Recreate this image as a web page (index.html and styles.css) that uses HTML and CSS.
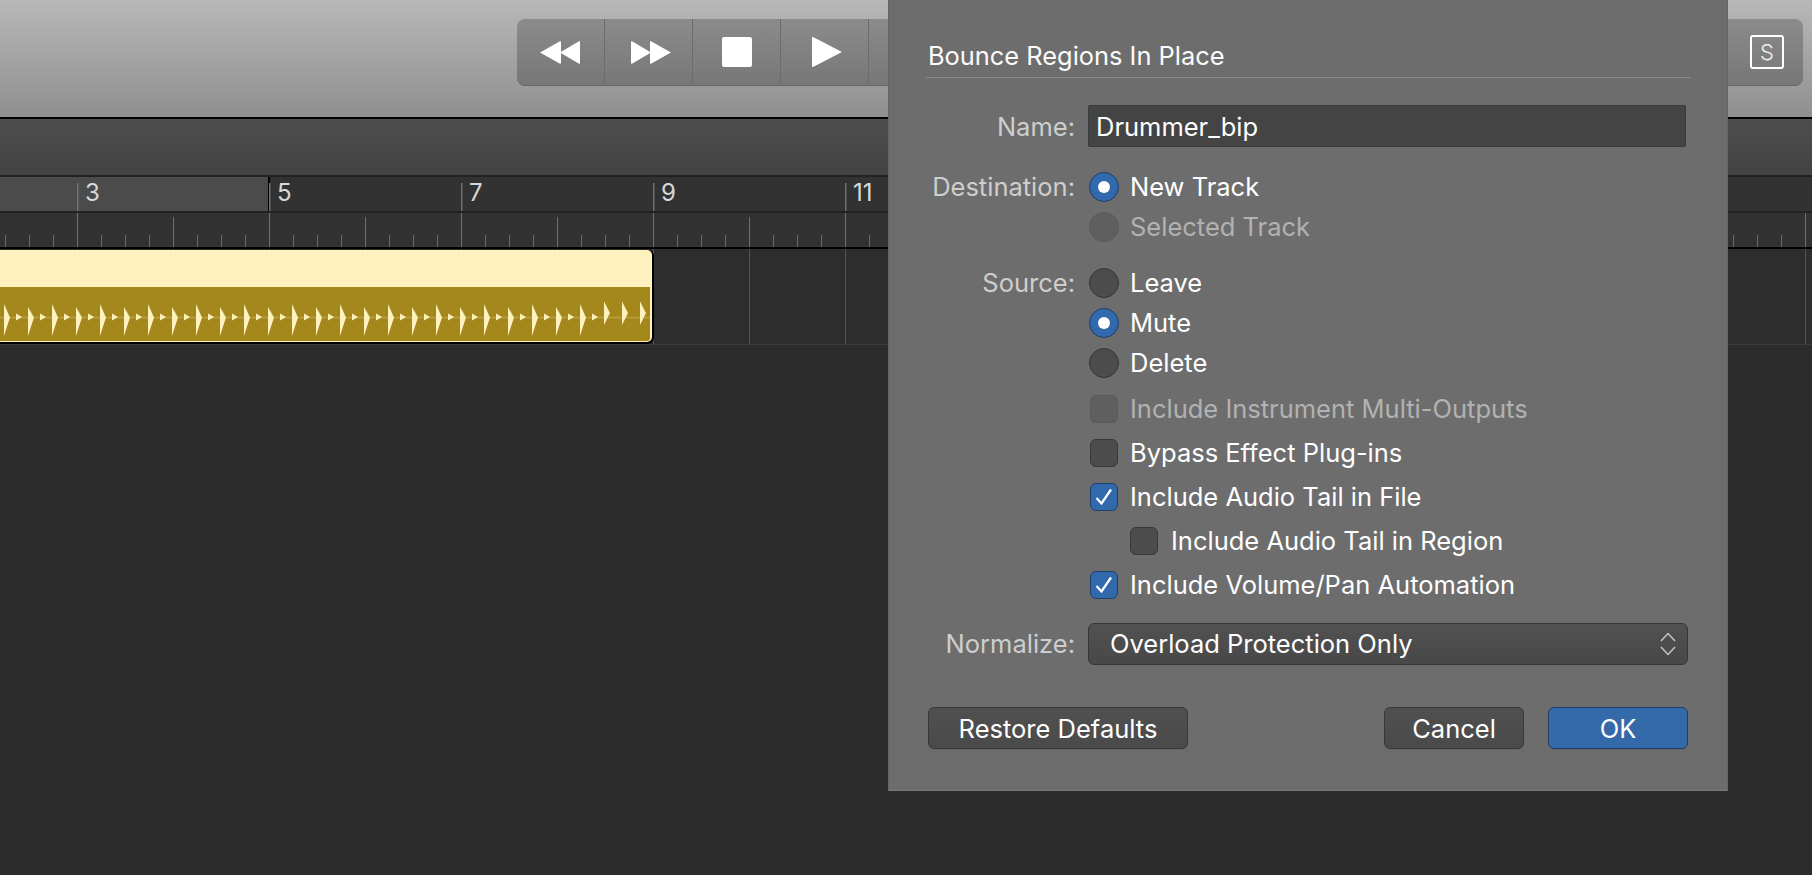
FILE: index.html
```html
<!DOCTYPE html>
<html lang="en">
<head>
<meta charset="utf-8">
<title>Bounce Regions In Place</title>
<link rel="stylesheet" href="styles.css">
</head>
<body>
<div class="app">
  <header class="toolbar">
    <div class="transport">
      <div class="seg"><svg class="ico rew" width="40" height="23" viewBox="0 0 40 23"><path fill="#fff" d="M0 11.500 L20 0.300 Q21 0 21 1 V22 Q21 23 20 22.700 Z M20 11.500 L39 0.300 Q40 0 40 1 V22 Q40 23 39 22.700 Z"/></svg></div>
      <div class="seg"><svg class="ico fwd" width="40" height="23" viewBox="0 0 40 23"><path fill="#fff" d="M40 11.500 L20 0.300 Q19 0 19 1 V22 Q19 23 20 22.700 Z M20 11.500 L1 0.300 Q0 0 0 1 V22 Q0 23 1 22.700 Z"/></svg></div>
      <div class="seg"><span class="stop"></span></div>
      <div class="seg"><svg class="ico play" width="30" height="30" viewBox="0 0 30 30"><path fill="#fff" d="M30 15 L1.500 0.200 Q0 -0.300 0 1 V29 Q0 30.300 1.500 29.800 Z"/></svg></div>
      <div class="spacer"></div>
      <div class="seg-last"><span class="solo">S</span></div>
    </div>
  </header>

  <div class="band"></div>

  <div class="ruler">
    <div class="bars">
      <span class="bar">3</span><span class="bar">5</span><span class="bar">7</span><span class="bar">9</span><span class="bar">11</span>
    </div>
    <div class="ticks"></div>
  </div>

  <div class="track">
    <div class="region">
      <div class="region-head"></div>
      <svg class="wave" width="650" height="54" viewBox="0 0 650 54">
        <defs>
          <pattern id="beat" width="48" height="54" patternUnits="userSpaceOnUse">
            <path fill="#fff1bd" d="M4 17 L10 30.500 L4 49 Z M28 20 L34 30.500 L28 49 Z M16 26.500 L22 30 L16 33.500 Z M40 26.500 L46 30 L40 33.500 Z"/>
          </pattern>
        </defs>
        <path d="M0 30.500 H650" stroke="#b89f45" stroke-width="1.500"/>
        <rect width="600" height="54" fill="url(#beat)"/>
        <path fill="#fff1bd" d="M604 14.500 L610 26 L604 38 Z M622 14.500 L628 26 L622 38 Z M640 14.500 L646 26 L640 38 Z"/>
      </svg>
    </div>
  </div>

  <section class="dialog">
    <h1 class="title">Bounce Regions In Place</h1>

    <div class="field name-field">
      <label class="label">Name:</label>
      <div class="input">Drummer_bip</div>
    </div>

    <div class="field group">
      <span class="label">Destination:</span>
      <div class="options">
        <div class="opt"><span class="radio on"></span><span class="txt">New Track</span></div>
        <div class="opt dim"><span class="radio off"></span><span class="txt">Selected Track</span></div>
      </div>
    </div>

    <div class="field group">
      <span class="label">Source:</span>
      <div class="options">
        <div class="opt"><span class="radio"></span><span class="txt">Leave</span></div>
        <div class="opt"><span class="radio on"></span><span class="txt">Mute</span></div>
        <div class="opt"><span class="radio"></span><span class="txt">Delete</span></div>
      </div>
    </div>

    <div class="field checks">
      <span class="label"></span>
      <div class="options">
        <div class="chk-row dim"><span class="check off"></span><span class="txt">Include Instrument Multi-Outputs</span></div>
        <div class="chk-row"><span class="check"></span><span class="txt">Bypass Effect Plug-ins</span></div>
        <div class="chk-row"><span class="check on"><svg width="20" height="20" viewBox="0 0 20 20"><path d="M2.500 11 L7.500 16.500 L17 2.500" fill="none" stroke="#fff" stroke-width="2.300"/></svg></span><span class="txt">Include Audio Tail in File</span></div>
        <div class="chk-row sub"><span class="check"></span><span class="txt">Include Audio Tail in Region</span></div>
        <div class="chk-row"><span class="check on"><svg width="20" height="20" viewBox="0 0 20 20"><path d="M2.500 11 L7.500 16.500 L17 2.500" fill="none" stroke="#fff" stroke-width="2.300"/></svg></span><span class="txt">Include Volume/Pan Automation</span></div>
      </div>
    </div>

    <div class="field select-field">
      <span class="label">Normalize:</span>
      <div class="select">
        <span class="txt">Overload Protection Only</span>
        <svg width="16" height="24" viewBox="0 0 16 24"><path d="M1 9 L8 1.500 L15 9 M1 15 L8 22.500 L15 15" fill="none" stroke="#c4c4c4" stroke-width="1.500"/></svg>
      </div>
    </div>

    <div class="actions">
      <button class="btn restore">Restore Defaults</button>
      <button class="btn cancel">Cancel</button>
      <button class="btn ok">OK</button>
    </div>
  </section>
</div>
</body>
</html>
```
FILE: styles.css
```css
* { box-sizing: border-box; }
html, body { margin: 0; height: 100%; }
body { background: #2c2c2c; font-family: Inter, "Liberation Sans", sans-serif; overflow: hidden; }

.app { position: relative; width: 1812px; height: 875px; overflow: hidden; }

/* toolbar */
.toolbar {
  height: 119px;
  padding: 19px 9px 0 517px;
  background: linear-gradient(#b8b8b8, #8f8f8f);
  border-bottom: 2px solid #000;
}
.transport {
  display: flex;
  height: 67px;
  border-radius: 8px;
  background: linear-gradient(#8b8b8b, #777);
  border-bottom: 1px solid #666;
}
.seg {
  flex: none;
  width: 88px;
  display: flex;
  align-items: center;
  justify-content: center;
  border-right: 1.500px solid #6c6c6c;
}
.ico { display: block; }
.rew { margin-left: -2px; }
.fwd { margin-left: 4px; }
.play { margin-left: 4px; }
.stop { width: 30px; height: 30px; background: #fff; border-radius: 2px; }
.spacer { flex: 1; }
.seg-last { flex: none; width: 71px; padding-left: 18px; display: flex; align-items: center; }
.solo {
  width: 34px;
  height: 34px;
  border: 2px solid #fff;
  border-radius: 3px;
  color: #eee;
  font-size: 22px;
  font-weight: 300;
  line-height: 30px;
  text-align: center;
}

/* header band */
.band {
  height: 56px;
  background: linear-gradient(#4d4d4d, #434343);
}

/* ruler */
.ruler { background: #323232; border-top: 2px solid #222; }
.bars {
  display: flex;
  height: 36px;
  padding-left: 77px;
  border-bottom: 2px solid #222;
  background:
    linear-gradient(#000, #000) 0 100% / 269px 2px no-repeat,
    linear-gradient(#000, #000) 267.500px 0 / 2px 100% no-repeat,
    linear-gradient(#4b4b4b, #4b4b4b) 0 0 / 269px 100% no-repeat;
  background-origin: border-box;
  background-clip: border-box;
}
.bar {
  flex: none;
  width: 192px;
  margin-top: 6px;
  padding-left: 8px;
  height: 28px;
  color: #d8d8d8;
  font-size: 24px;
  line-height: 19px;
  background: linear-gradient(#6f6f6f, #6f6f6f) 0 0 / 1.500px 100% no-repeat;
}
.ticks {
  height: 34px;
  background:
    linear-gradient(90deg, #707070 1.500px, transparent 1.500px) 77px 100% / 192px 100% repeat-x,
    linear-gradient(90deg, #707070 1.500px, transparent 1.500px) 173px 100% / 192px 30px repeat-x,
    linear-gradient(90deg, #666 1.500px, transparent 1.500px) 5px 100% / 24px 12px repeat-x;
}

/* track lane */
.track {
  height: 98px;
  padding-top: 1px;
  border-top: 2px solid #000;
  border-bottom: 1px solid #3a3a3a;
  background: linear-gradient(90deg, #555 1.500px, transparent 1.500px) 77px 0 / 96px 100% repeat-x, #2d2d2d;
}
.region {
  display: flex;
  flex-direction: column;
  width: 652px;
  height: 92px;
  background: #fff1bd;
  border-radius: 0 5px 5px 0;
  box-shadow: 1px 1px 0 1px #000;
  padding: 0 2px 1px 0;
}
.region-head { height: 37px; flex: none; }
.wave { display: block; flex: none; background: #a5881c; border-bottom-right-radius: 3px; }

/* dialog */
.dialog {
  position: absolute;
  left: 888px;
  top: 0;
  width: 840px;
  height: 791px;
  padding: 0 39px;
  background: #6d6d6d;
  border-right: 1px solid #646464;
  border-left: 1px solid #646464;
  border-bottom: 1px solid #7a7a7a;
  color: #fff;
  font-size: 25.500px;
}
.title {
  height: 78px;
  margin: 0 -3px 27px -2px;
  padding: 40px 0 0 2px;
  border-bottom: 1.500px solid #8a8a8a;
  font-size: 25.400px;
  font-weight: 400;
  line-height: 32px;
  color: #fbfbfb;
}
.field { display: grid; grid-template-columns: 147px 600px; column-gap: 13px; }
.label { text-align: right; color: #cecece; line-height: 39px; }
.name-field { height: 42px; margin-bottom: 20px; }
.name-field .label { line-height: 44px; }
.select-field { height: 42px; }
.select-field .label { line-height: 42px; }
.input {
  height: 42px;
  padding-left: 7px;
  line-height: 42px;
  background: #444;
  border: 1px solid #3a3a3a;
  border-radius: 2px;
  width: 598px;
}
.group { margin-bottom: 16px; }
.options { display: flex; flex-direction: column; }
.opt { display: flex; align-items: center; height: 40px; gap: 11px; padding-left: 1px; }
.chk-row { display: flex; align-items: center; height: 44px; gap: 12px; padding-left: 2px; }
.txt { padding-bottom: 2px; }
.sub { padding-left: 42px; gap: 13px; }
.dim { color: #b2b2b2; }
.checks { margin-top: -12px; margin-bottom: 16px; }

.radio {
  flex: none;
  width: 30px;
  height: 30px;
  border-radius: 50%;
  background: #4c4c4c;
  border: 1px solid #353535;
  display: flex;
  align-items: center;
  justify-content: center;
}
.radio.on { background: #3169ac; border-color: #1d3f6c; }
.radio.on::after { content: ""; width: 12px; height: 12px; border-radius: 50%; background: #fff; }
.radio.off { background: #5f5f5f; border-color: #595959; }

.check {
  flex: none;
  width: 28px;
  height: 28px;
  border-radius: 6px;
  background: #4c4c4c;
  border: 1px solid #383838;
  display: flex;
  align-items: center;
  justify-content: center;
}
.check.on { background: #3169ac; border-color: #1d3f6c; }
.check.off { background: #5f5f5f; border-color: #595959; }

.select {
  display: flex;
  align-items: center;
  justify-content: space-between;
  height: 42px;
  padding: 0 11px 0 21px;
  background: linear-gradient(#515151, #484848);
  border: 1px solid #363636;
  border-radius: 6px;
}

.actions { display: flex; gap: 24px; margin-top: 42px; }
.btn {
  height: 42px;
  padding: 0;
  font: inherit;
  color: #fff;
  background: linear-gradient(#505050, #4a4a4a);
  border: 1px solid #383838;
  border-radius: 6px;
  box-shadow: 0 1px 0 rgba(0, 0, 0, .08);
}
.restore { width: 260px; margin-right: auto; }
.cancel, .ok { width: 140px; }
.ok { background: #3469aa; border-color: #1f3f69; }
```
